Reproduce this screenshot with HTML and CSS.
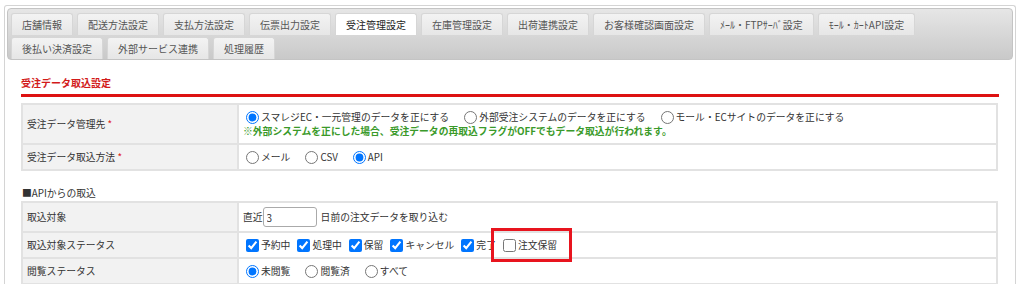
FILE: index.html
```html
<!DOCTYPE html>
<html lang="ja">
<head>
    <meta charset="UTF-8">
    <title>受注管理設定</title>
    <link rel="stylesheet" href="styles.css">
</head>
<body>
    <div class="panel">
        <ul class="tabs">
            <li>店舗情報</li>
            <li>配送方法設定</li>
            <li>支払方法設定</li>
            <li>伝票出力設定</li>
            <li class="active">受注管理設定</li>
            <li>在庫管理設定</li>
            <li>出荷連携設定</li>
            <li>お客様確認画面設定</li>
            <li>ﾒｰﾙ・FTPｻｰﾊﾞ設定</li>
            <li>ﾓｰﾙ・ｶｰﾄAPI設定</li>
            <li>後払い決済設定</li>
            <li>外部サービス連携</li>
            <li>処理履歴</li>
        </ul>

        <div class="content">
            <h2 class="section-title">受注データ取込設定</h2>

            <table class="form-table">
                <tr>
                    <th>受注データ管理先 <span class="req">*</span></th>
                    <td>
                        <div class="line">
                            <label class="opt"><input type="radio" name="master" checked>スマレジEC・一元管理のデータを正にする</label>
                            <label class="opt"><input type="radio" name="master">外部受注システムのデータを正にする</label>
                            <label class="opt"><input type="radio" name="master">モール・ECサイトのデータを正にする</label>
                        </div>
                        <div class="note">※外部システムを正にした場合、受注データの再取込フラグがOFFでもデータ取込が行われます。</div>
                    </td>
                </tr>
                <tr>
                    <th>受注データ取込方法 <span class="req">*</span></th>
                    <td>
                        <div class="line">
                            <label class="opt"><input type="radio" name="method">メール</label>
                            <label class="opt"><input type="radio" name="method">CSV</label>
                            <label class="opt"><input type="radio" name="method" checked>API</label>
                        </div>
                    </td>
                </tr>
            </table>

            <p class="sub-title">■APIからの取込</p>

            <table class="form-table">
                <tr class="row-input">
                    <th>取込対象</th>
                    <td>
                        <div class="line">直近<input type="text" class="days" value="3"><span class="after">日前の注文データを取り込む</span></div>
                    </td>
                </tr>
                <tr>
                    <th>取込対象ステータス</th>
                    <td>
                        <div class="line">
                            <label class="chk"><input type="checkbox" checked>予約中</label>
                            <label class="chk"><input type="checkbox" checked>処理中</label>
                            <label class="chk"><input type="checkbox" checked>保留</label>
                            <label class="chk"><input type="checkbox" checked>キャンセル</label>
                            <label class="chk"><input type="checkbox" checked>完了</label>
                            <label class="chk marked"><input type="checkbox">注文保留</label>
                        </div>
                    </td>
                </tr>
                <tr>
                    <th>閲覧ステータス</th>
                    <td>
                        <div class="line">
                            <label class="opt"><input type="radio" name="read" checked>未閲覧</label>
                            <label class="opt"><input type="radio" name="read">閲覧済</label>
                            <label class="opt"><input type="radio" name="read">すべて</label>
                        </div>
                    </td>
                </tr>
            </table>
        </div>
    </div>
</body>
</html>
```

FILE: styles.css
```css
body {
    margin: 0;
    padding: 5px 8px 0 4px;
    font-family: "Noto Sans CJK JP", sans-serif;
    font-size: 9.8px;
    line-height: 14px;
    color: #333;
    background-color: #fff;
}

.panel {
    border: 1px solid #d4d4d4;
    border-bottom: none;
    border-radius: 3px 3px 0 0;
    padding: 2px 2px 0 2px;
    height: 300px;
}

/* Tab bar */
.tabs {
    list-style: none;
    margin: 0;
    padding: 4px 3px 0 3px;
    display: flex;
    flex-wrap: wrap;
    column-gap: 4px;
    row-gap: 2px;
    border: 1px solid #c4c4c4;
    border-radius: 4px;
    background: linear-gradient(#e6e6e6, #c9c9c9);
    font-size: 10px;
}

.tabs li {
    height: 21px;
    line-height: 21px;
    padding: 0 10px;
    border: 1px solid #d6d6d6;
    border-bottom: none;
    border-radius: 3px 3px 0 0;
    background: linear-gradient(#f3f3f3, #e6e6e6);
    color: #555;
    white-space: nowrap;
}

.tabs li.active {
    background: #fff;
    color: #222;
}

/* Content */
.content {
    padding: 16px 14px 0 14px;
}

.section-title {
    margin: 0;
    padding-bottom: 4px;
    font-size: 10px;
    font-weight: bold;
    color: #d21a1a;
    border-bottom: 3px solid #dd1111;
}

.sub-title {
    margin: 15px 0 1px 1px;
    height: 14px;
}

.form-table {
    width: 977px;
    border-collapse: collapse;
    margin-top: 6px;
}

.sub-title + .form-table {
    margin-top: 0;
}

.form-table th,
.form-table td {
    border: 2px solid #e2e2e2;
    padding: 5px 4px;
    vertical-align: middle;
    text-align: left;
}

.form-table th {
    width: 206px;
    height: 14px;
    font-weight: normal;
    background-color: #f2f2f2;
}

.form-table tr.row-input td,
.form-table tr.row-input th {
    padding-top: 4px;
    padding-bottom: 4px;
}

.line {
    display: flex;
    align-items: center;
    height: 14px;
    white-space: nowrap;
}

.row-input .line {
    height: 20px;
}

.req {
    color: #e02020;
}

.opt,
.chk {
    display: flex;
    align-items: center;
    margin-right: 12px;
}

.chk {
    margin-right: 4px;
}

.opt input,
.chk input {
    width: 13px;
    height: 13px;
    margin: 0 2px 0 3px;
}

.note {
    height: 14px;
    color: #3a9a2a;
    font-weight: bold;
}

.days {
    box-sizing: border-box;
    width: 54px;
    height: 20px;
    padding: 0 3px;
    margin: 0;
    border: 1px solid #aaa;
    border-radius: 3px;
    font-family: inherit;
    font-size: 10px;
    color: #333;
}

.after {
    margin-left: 4px;
}

/* Annotation around the last option */
.marked {
    position: relative;
}

.marked::after {
    content: "";
    position: absolute;
    left: -9px;
    right: -15px;
    top: -10px;
    bottom: -10px;
    border: 3px solid #e8141e;
}
```
